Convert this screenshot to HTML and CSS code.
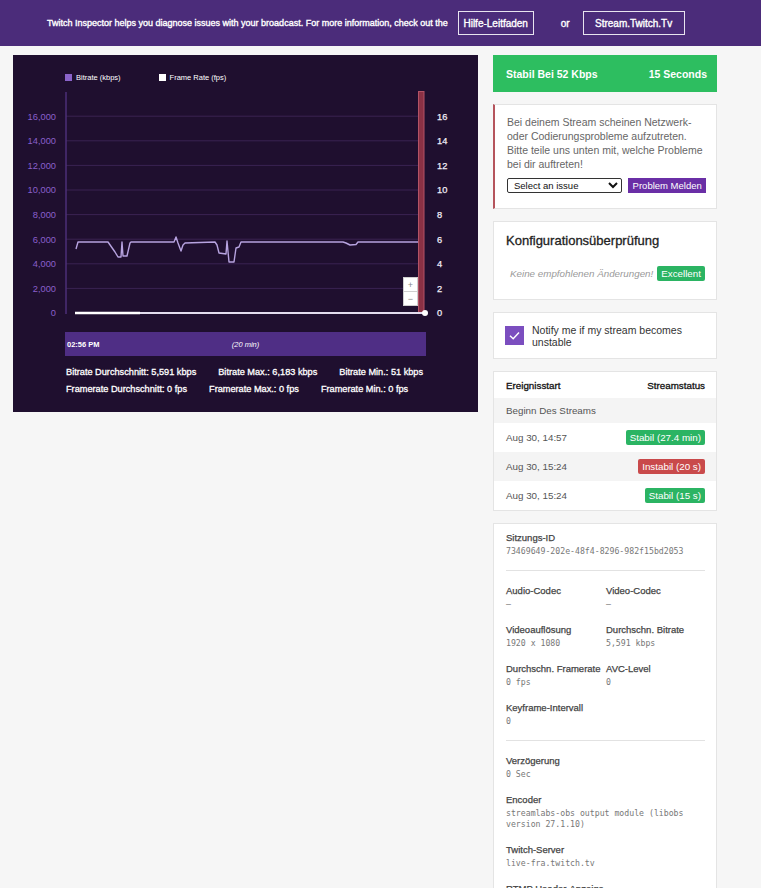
FILE: index.html
```html
<!DOCTYPE html>
<html>
<head>
<meta charset="utf-8">
<link rel="stylesheet" href="styles.css">
</head>
<body>
<header class="topbar">
  <span class="topbar-text">Twitch Inspector helps you diagnose issues with your broadcast. For more information, check out the</span>
  <a class="topbar-btn btn-help">Hilfe-Leitfaden</a>
  <span class="topbar-or">or</span>
  <a class="topbar-btn btn-site">Stream.Twitch.Tv</a>
</header>

<main class="layout">
  <section class="chart-panel">
    <div class="legend">
      <span class="legend-item"><i class="swatch swatch-purple"></i>Bitrate (kbps)</span>
      <span class="legend-item"><i class="swatch swatch-white"></i>Frame Rate (fps)</span>
    </div>
    <svg class="plot" width="465" height="235" viewBox="13 85 465 235">
      <g class="grid">
        <line x1="66" y1="116.2" x2="418" y2="116.2"/>
        <line x1="66" y1="140.8" x2="418" y2="140.8"/>
        <line x1="66" y1="165.4" x2="418" y2="165.4"/>
        <line x1="66" y1="190" x2="418" y2="190"/>
        <line x1="66" y1="214.6" x2="418" y2="214.6"/>
        <line x1="66" y1="239.2" x2="418" y2="239.2"/>
        <line x1="66" y1="263.8" x2="418" y2="263.8"/>
        <line x1="66" y1="288.4" x2="418" y2="288.4"/>
      </g>
      <line class="axis" x1="66" y1="92" x2="66" y2="314"/>
      <g class="ylabels-left">
        <text x="56" y="119.5">16,000</text>
        <text x="56" y="144.1">14,000</text>
        <text x="56" y="168.7">12,000</text>
        <text x="56" y="193.3">10,000</text>
        <text x="56" y="217.9">8,000</text>
        <text x="56" y="242.5">6,000</text>
        <text x="56" y="267.1">4,000</text>
        <text x="56" y="291.7">2,000</text>
        <text x="56" y="316.3">0</text>
      </g>
      <g class="ylabels-right">
        <text x="437" y="119.5">16</text>
        <text x="437" y="144.1">14</text>
        <text x="437" y="168.7">12</text>
        <text x="437" y="193.3">10</text>
        <text x="437" y="217.9">8</text>
        <text x="437" y="242.5">6</text>
        <text x="437" y="267.1">4</text>
        <text x="437" y="291.7">2</text>
        <text x="437" y="316.3">0</text>
      </g>
      <polyline class="bitrate" points="76,249 78,242 108,242 115,252 118,257 121,257 122,242 123,256 127,256 130,243 131,242 174,242 176,237 178,243 181,251 183,245 185,243 215,242 217,245 219,253 226,254 227,241 229,262 234,262 236,248 239,247 241,242 343,242 346,243 350,245 356,244.5 358,242 418,242"/>
      <rect class="marker" x="418.5" y="91.5" width="5.5" height="222"/>
      <line class="fps-dim" x1="140" y1="313" x2="425" y2="313"/>
      <line class="fps" x1="75" y1="313" x2="140" y2="313"/>
      <circle class="fps-dot" cx="425" cy="313" r="3"/>
      <g class="zoomctl">
        <rect x="403.5" y="277.5" width="14" height="14"/>
        <rect x="403.5" y="291.5" width="14" height="14"/>
        <text x="410.5" y="288">+</text>
        <text x="410.5" y="302">−</text>
      </g>
    </svg>
    <div class="timebar">
      <span class="time-start">02:56 PM</span>
      <span class="time-span">(20 min)</span>
      <span></span>
    </div>
    <div class="stats">
      <div class="stats-row">
        <span>Bitrate Durchschnitt: 5,591 kbps</span>
        <span>Bitrate Max.: 6,183 kbps</span>
        <span>Bitrate Min.: 51 kbps</span>
      </div>
      <div class="stats-row">
        <span>Framerate Durchschnitt: 0 fps</span>
        <span>Framerate Max.: 0 fps</span>
        <span>Framerate Min.: 0 fps</span>
      </div>
    </div>
  </section>

  <aside class="side">
    <div class="status-bar">
      <span>Stabil Bei 52 Kbps</span>
      <span>15 Seconds</span>
    </div>

    <div class="card alert-card">
      <p class="alert-text">Bei deinem Stream scheinen Netzwerk-oder Codierungsprobleme aufzutreten. Bitte teile uns unten mit, welche Probleme bei dir auftreten!</p>
      <div class="alert-actions">
        <select class="issue-select"><option>Select an issue</option></select>
        <button class="report-btn">Problem Melden</button>
      </div>
    </div>

    <div class="card config-card">
      <h2 class="config-title">Konfigurationsüberprüfung</h2>
      <div class="config-row">
        <span class="config-note">Keine empfohlenen Änderungen!</span>
        <span class="badge badge-green">Excellent</span>
      </div>
    </div>

    <div class="card notify-card">
      <span class="checkbox">
        <svg width="19" height="19" viewBox="0 0 19 19"><path d="M5 9.8 L8.2 12.8 L14 6.6" fill="none" stroke="#fff" stroke-width="1.4"/></svg>
      </span>
      <span class="notify-text">Notify me if my stream becomes unstable</span>
    </div>

    <div class="card table-card">
      <div class="trow thead">
        <span>Ereignisstart</span>
        <span>Streamstatus</span>
      </div>
      <div class="trow tgray">
        <span>Beginn Des Streams</span>
      </div>
      <div class="trow tbody">
        <span>Aug 30, 14:57</span>
        <span class="badge badge-green">Stabil (27.4 min)</span>
      </div>
      <div class="trow tbody tgray">
        <span>Aug 30, 15:24</span>
        <span class="badge badge-red">Instabil (20 s)</span>
      </div>
      <div class="trow tbody">
        <span>Aug 30, 15:24</span>
        <span class="badge badge-green">Stabil (15 s)</span>
      </div>
    </div>

    <div class="card session-card">
      <div class="field">
        <div class="label">Sitzungs-ID</div>
        <div class="value">73469649-202e-48f4-8296-982f15bd2053</div>
      </div>
      <hr class="divider">
      <div class="field-grid">
        <div class="field"><div class="label">Audio-Codec</div><div class="value">–</div></div>
        <div class="field"><div class="label">Video-Codec</div><div class="value">–</div></div>
        <div class="field"><div class="label">Videoauflösung</div><div class="value">1920 x 1080</div></div>
        <div class="field"><div class="label">Durchschn. Bitrate</div><div class="value">5,591 kbps</div></div>
        <div class="field"><div class="label">Durchschn. Framerate</div><div class="value">0 fps</div></div>
        <div class="field"><div class="label">AVC-Level</div><div class="value">0</div></div>
        <div class="field"><div class="label">Keyframe-Intervall</div><div class="value">0</div></div>
      </div>
      <hr class="divider">
      <div class="field-list">
        <div class="field"><div class="label">Verzögerung</div><div class="value">0 Sec</div></div>
        <div class="field"><div class="label">Encoder</div><div class="value">streamlabs-obs output module (libobs version 27.1.10)</div></div>
        <div class="field"><div class="label">Twitch-Server</div><div class="value">live-fra.twitch.tv</div></div>
        <div class="field"><div class="label">RTMP Header-Anzeige</div><div class="value">–</div></div>
      </div>
    </div>
  </aside>
</main>
</body>
</html>
```

FILE: styles.css
```css
* { box-sizing: border-box; }
html, body { margin: 0; padding: 0; }
body {
  background: #f6f6f6;
  font-family: "Liberation Sans", Arial, sans-serif;
  color: #333;
}

.topbar {
  height: 46px;
  background: #4b2c7a;
  display: flex;
  align-items: center;
  padding-left: 47px;
  color: #fff;
  font-size: 9px;
  white-space: nowrap;
  -webkit-text-stroke: 0.35px #fff;
}
.topbar-btn {
  display: inline-flex;
  align-items: center;
  justify-content: center;
  height: 24px;
  border: 1px solid #e8e4ef;
  font-size: 10px;
  color: #fff;
}
.btn-help { margin-left: 10px; width: 76px; }
.btn-site { width: 102px; }
.topbar-or { margin: 0 13px 0 27px; font-size: 10px; }

.layout {
  display: flex;
  align-items: flex-start;
  padding: 9px 0 0 13px;
  gap: 15px;
}

.chart-panel {
  width: 465px;
  height: 357px;
  background: #1f0f2f;
  color: #fff;
}
.legend {
  display: flex;
  gap: 38px;
  padding: 18px 0 0 52px;
  height: 30px;
  font-size: 7.5px;
}
.legend-item { display: flex; align-items: center; gap: 4px; height: 8px; }
.swatch { display: inline-block; width: 7px; height: 7px; }
.swatch-purple { background: #8a63c9; }
.swatch-white { background: #fff; }

.plot { display: block; }
.grid line { stroke: #3a2352; stroke-width: 1; }
.axis { stroke: #4d2f78; stroke-width: 1.5; }
.ylabels-left text {
  fill: #8a5fcc;
  font-size: 9.3px;
  text-anchor: end;
  font-family: "Liberation Sans", Arial, sans-serif;
}
.ylabels-right text {
  fill: #f2eef8;
  font-size: 9.3px;
  font-family: "Liberation Sans", Arial, sans-serif;
  stroke: #f2eef8;
  stroke-width: 0.25px;
}
.bitrate { fill: none; stroke: #b7a3e0; stroke-width: 1.4; stroke-linejoin: round; }
.marker { fill: #8a3145; stroke: #b35366; stroke-width: 1; }
.fps { stroke: #ffffff; stroke-width: 2.5; }
.fps-dim { stroke: #e3dcef; stroke-width: 2; }
.fps-dot { fill: #fff; }
.zoomctl rect { fill: #fff; stroke: #cfcfcf; stroke-width: 1; }
.zoomctl text {
  fill: #888;
  font-size: 9px;
  text-anchor: middle;
  font-family: "Liberation Sans", Arial, sans-serif;
}

.timebar {
  display: grid;
  grid-template-columns: 1fr auto 1fr;
  align-items: center;
  margin: 12px 0 0 52px;
  width: 361px;
  height: 24px;
  background: #4f2e85;
  padding: 0 2px;
  font-size: 7.5px;
}
.time-start { font-weight: bold; }
.time-span { font-style: italic; }

.stats {
  padding: 11px 0 0 53px;
  font-size: 9.2px;
  display: flex;
  flex-direction: column;
  gap: 7px;
  -webkit-text-stroke: 0.3px #fff;
}
.stats-row { display: flex; gap: 22px; line-height: 10px; }

.side {
  width: 224px;
  display: flex;
  flex-direction: column;
  gap: 12px;
  padding-bottom: 20px;
}
.status-bar {
  height: 37px;
  background: #2dbe60;
  color: #fff;
  font-weight: bold;
  font-size: 10.5px;
  display: flex;
  align-items: center;
  justify-content: space-between;
  padding: 0 10px 0 13px;
}
.card {
  background: #fff;
  border: 1px solid #e4e4e4;
}
.alert-card {
  border-left: 2px solid #b5545c;
  padding: 10px 10px 15px 12px;
  height: 105px;
}
.alert-text {
  margin: 0;
  font-size: 10.5px;
  line-height: 14px;
  color: #666;
}
.alert-actions {
  display: flex;
  align-items: center;
  gap: 6px;
  margin-top: 7px;
}
.issue-select {
  width: 116px;
  height: 15px;
  font-size: 9.5px;
  font-family: "Liberation Sans", Arial, sans-serif;
  border: 1px solid #333;
  border-radius: 2px;
  padding: 0 0 0 2px;
  background: #fff;
  color: #111;
}
.report-btn {
  height: 15px;
  width: 78px;
  border: none;
  background: #6a2fa6;
  color: #fff;
  font-size: 9.5px;
  font-family: "Liberation Sans", Arial, sans-serif;
  padding: 0;
}

.config-card { padding: 11px 11px 16px 12px; height: 79px; }
.config-title {
  margin: 0;
  font-size: 13px;
  font-weight: normal;
  color: #222;
  -webkit-text-stroke: 0.3px #222;
  line-height: 15px;
}
.config-row {
  display: flex;
  align-items: center;
  justify-content: space-between;
  margin-top: 18px;
  padding-left: 4px;
}
.config-note { font-style: italic; color: #9a9a9a; font-size: 9.8px; }
.badge {
  display: inline-flex;
  align-items: center;
  height: 15px;
  padding: 0 4px;
  border-radius: 2px;
  color: #fff;
  font-size: 9.8px;
}
.badge-green { background: #2bb463; }
.badge-red { background: #c94a4b; }

.notify-card {
  height: 47px;
  display: flex;
  align-items: center;
  padding: 0 11px;
  gap: 8px;
}
.checkbox {
  width: 19px;
  height: 19px;
  flex: none;
  background: #7b4ebf;
  display: block;
}
.checkbox svg { display: block; }
.notify-text { font-size: 10.5px; line-height: 12px; color: #333; }

.table-card { padding: 0; }
.trow {
  display: flex;
  align-items: center;
  justify-content: space-between;
  padding: 0 11px 0 12px;
  font-size: 9.8px;
  color: #555;
}
.thead { height: 26px; color: #111; font-size: 9.8px; -webkit-text-stroke: 0.3px #111; }
.tgray { background: #f4f4f4; height: 25px; }
.tbody { height: 29px; }

.session-card { padding: 8px 11px 0 12px; }
.label {
  font-size: 9.5px;
  color: #444;
  -webkit-text-stroke: 0.25px #444;
  line-height: 12px;
}
.value {
  font-family: "DejaVu Sans Mono", "Liberation Mono", monospace;
  font-size: 8.2px;
  color: #777;
  line-height: 11px;
  margin-top: 2px;
}
.divider {
  border: 0;
  border-top: 1px solid #e2e2e2;
  margin: 13px 0 14px;
}
.field-grid {
  display: grid;
  grid-template-columns: 100px 1fr;
  row-gap: 14px;
}
.field-list {
  display: flex;
  flex-direction: column;
  gap: 14px;
}
```
